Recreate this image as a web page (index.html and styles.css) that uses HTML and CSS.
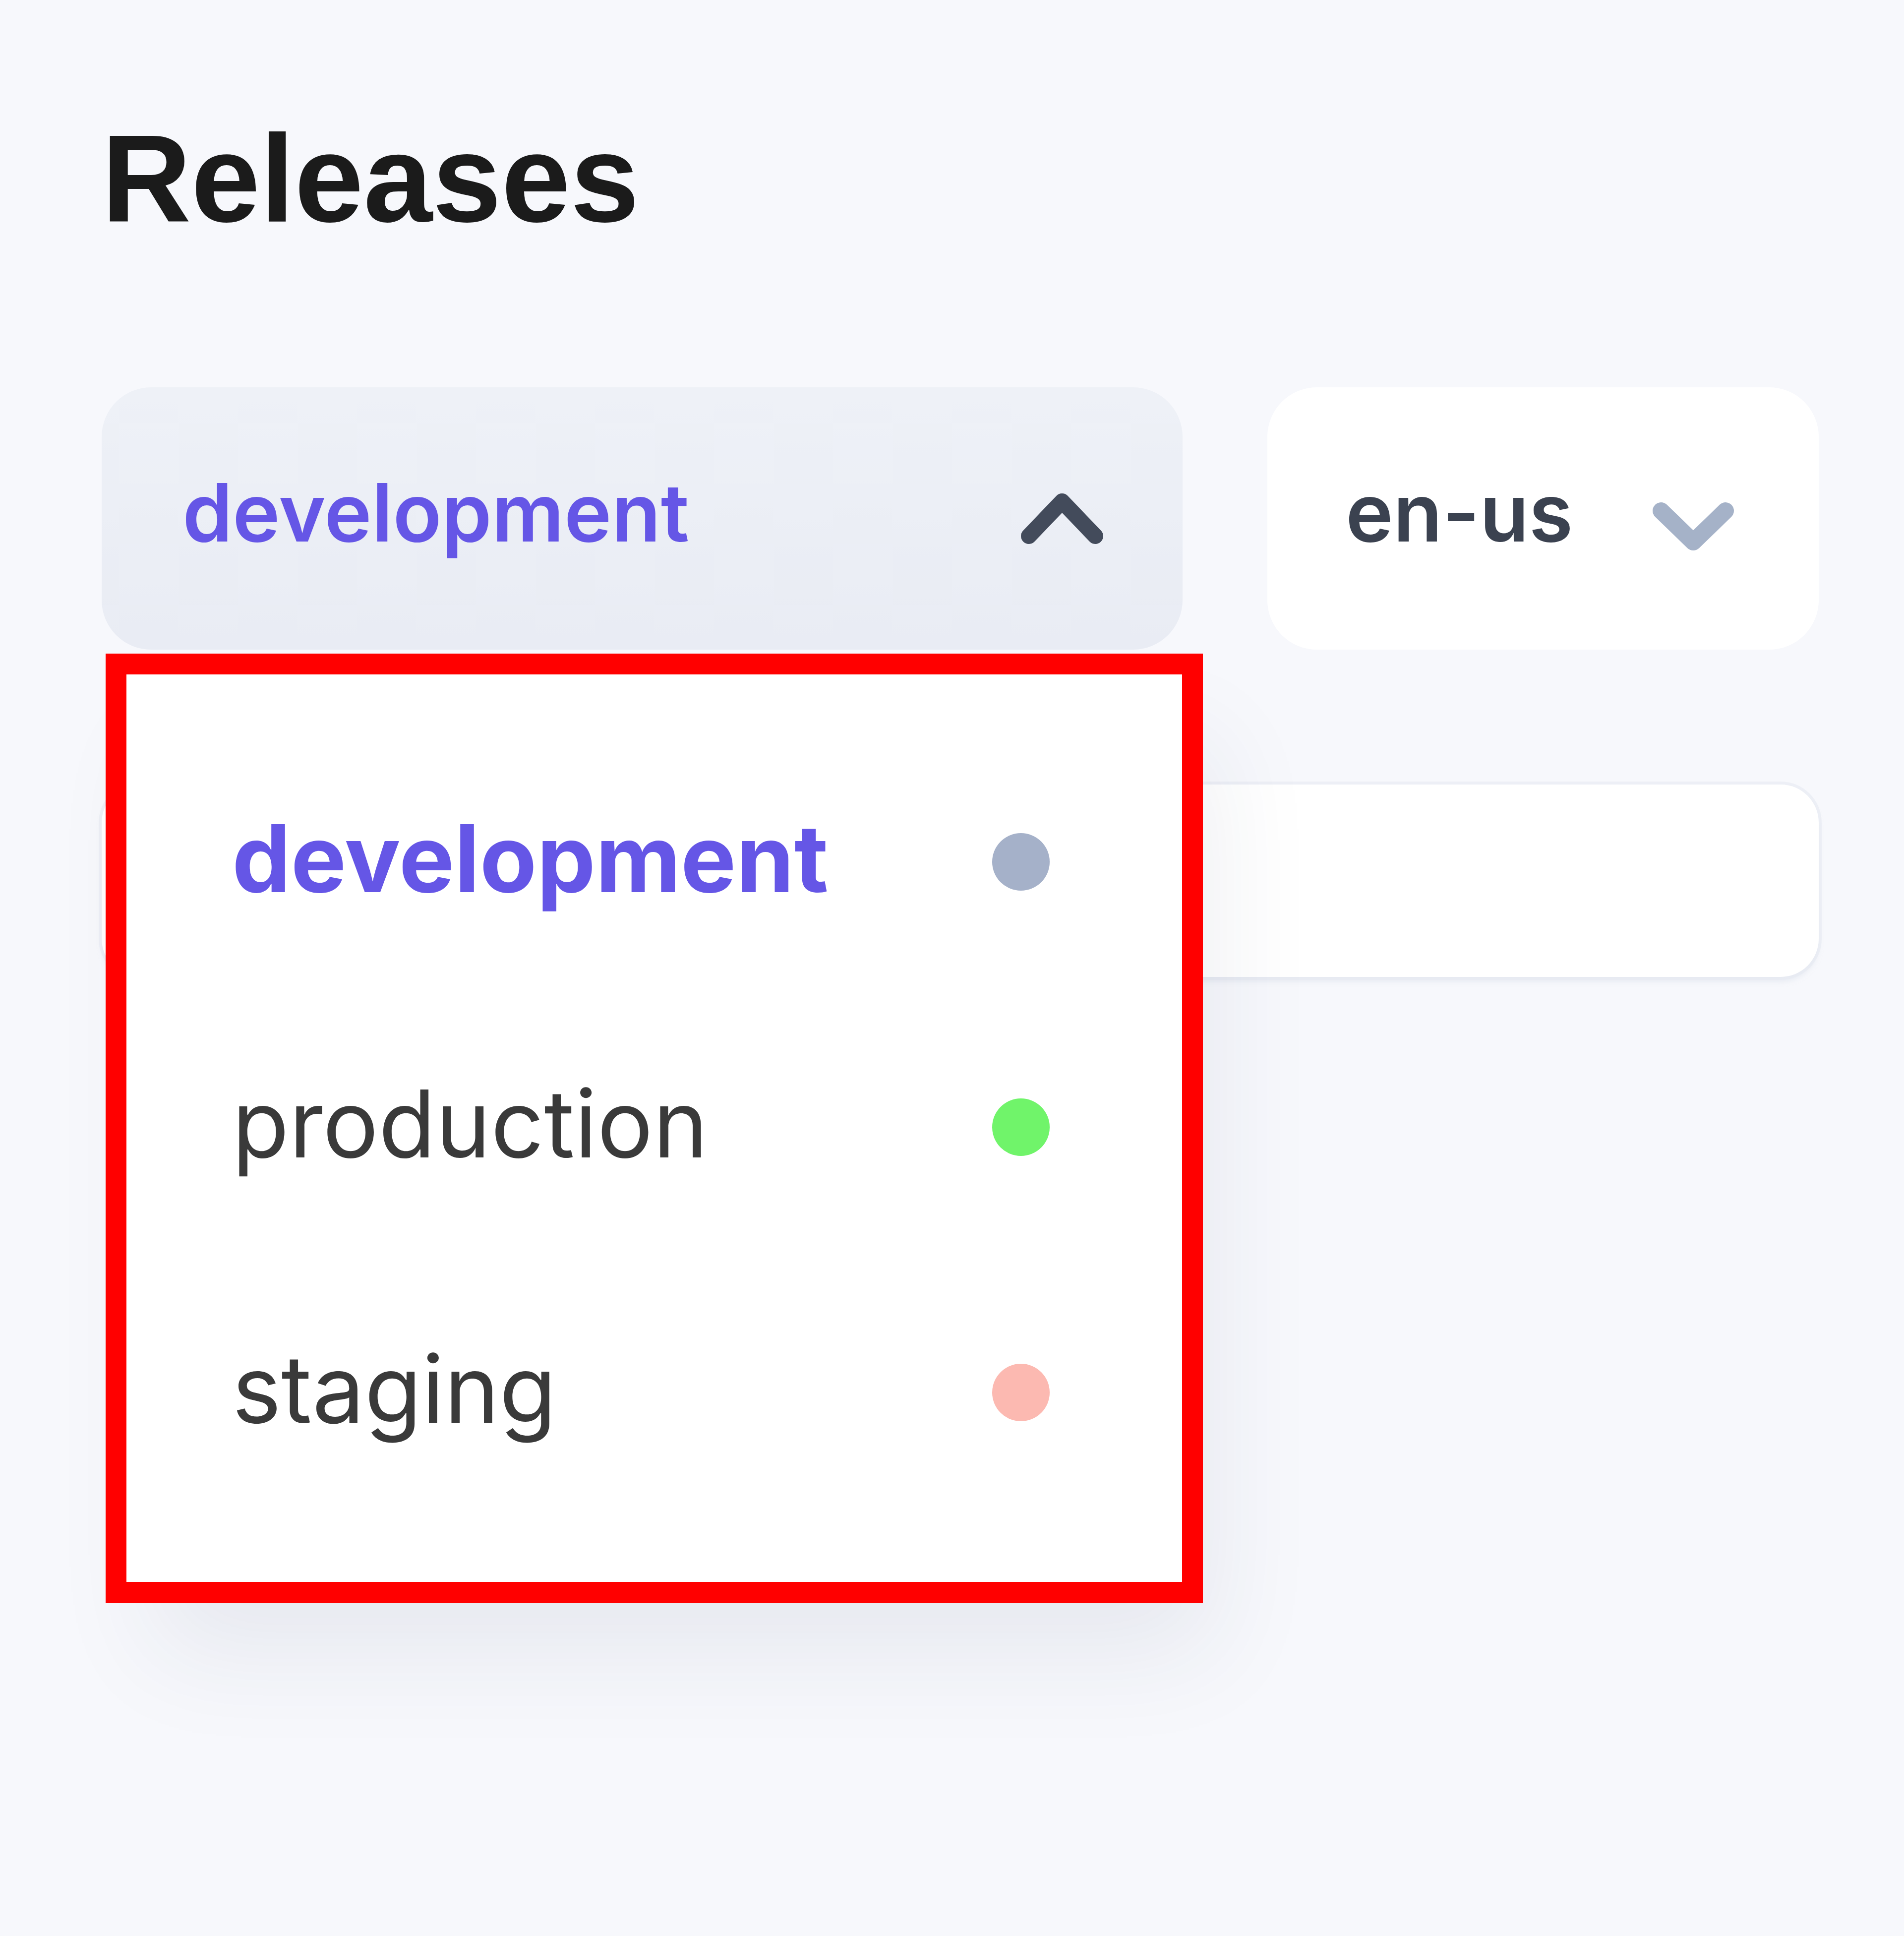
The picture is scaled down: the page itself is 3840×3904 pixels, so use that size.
FILE: index.html
```html
<!DOCTYPE html>
<html lang="en">
<head>
    <meta charset="UTF-8">
    <meta name="viewport" content="width=device-width, initial-scale=1.0">
    <title>Releases</title>
    <link rel="stylesheet" href="styles.css">
</head>
<body>
    <div class="page">
        <h1 class="title">Releases</h1>

        <div class="controls">
            <!-- environment picker, menu open -->
            <div class="env-picker">
                <button class="select select-open">
                    <span class="select-value env-value">development</span>
                    <svg class="chevron chevron-up" width="170" height="110" viewBox="0 0 170 110">
                        <path d="M18 90 L85 20 L152 90" />
                    </svg>
                </button>
                <ul class="env-menu">
                    <li class="env-item active">
                        <span class="env-name">development</span>
                        <span class="dot dot-dev"></span>
                    </li>
                    <li class="env-item">
                        <span class="env-name">production</span>
                        <span class="dot dot-prod"></span>
                    </li>
                    <li class="env-item">
                        <span class="env-name">staging</span>
                        <span class="dot dot-stage"></span>
                    </li>
                </ul>
            </div>

            <button class="select locale">
                <span class="select-value locale-value">en-us</span>
                <svg class="chevron chevron-down" width="166" height="100" viewBox="0 0 166 100">
                    <path d="M18 18 L83 81 L148 18" />
                </svg>
            </button>
        </div>

        <div class="search-bar"></div>
    </div>
</body>
</html>
```

FILE: styles.css
```css
body {
    margin: 0;
    font-family: Inter, "Noto Sans", sans-serif;
    background-color: #f7f8fc;
}
.page {
    box-sizing: border-box;
    min-height: 100vh;
    padding: 236px 172px 0 205px;
}
.title {
    margin: 0;
    font-family: "Liberation Sans", Arial, sans-serif;
    font-size: 250px;
    line-height: 250px;
    font-weight: 700;
    color: #1b1b1b;
}

.controls {
    display: flex;
    gap: 171px;
    margin-top: 295px;
}
.env-picker {
    position: relative;
    width: 2180px;
}
.select {
    display: flex;
    align-items: center;
    justify-content: space-between;
    box-sizing: border-box;
    width: 100%;
    height: 529px;
    padding: 0 158px 0 163px;
    border: none;
    border-radius: 100px;
    background-color: #fff;
    font-family: inherit;
    cursor: pointer;
}
.select-open {
    background: linear-gradient(#eef1f7, #e9ecf4);
}
.select-value {
    font-size: 162px;
    font-weight: 600;
    padding-bottom: 26px;
}
.env-value {
    color: #6556e6;
}
.locale {
    width: 1112px;
    padding: 0 170px 0 158px;
}
.locale-value {
    color: #3b4250;
}

.chevron path {
    fill: none;
    stroke-linecap: round;
    stroke-linejoin: round;
}
.chevron-up path {
    stroke: #434b5b;
    stroke-width: 32;
}
.chevron-down {
    margin-top: 32px;
}
.chevron-down path {
    stroke: #a5b2c8;
    stroke-width: 34;
}

/* open dropdown */
.env-menu {
    position: absolute;
    top: 537px;
    left: 8px;
    z-index: 2;
    box-sizing: border-box;
    width: 2213px;
    margin: 0;
    padding: 110px 0 115px;
    list-style: none;
    background-color: #fff;
    border: 42px solid #ff0000;
    box-shadow: 60px 140px 200px -40px rgba(40, 50, 90, 0.08);
}
.env-item {
    display: flex;
    align-items: center;
    justify-content: space-between;
    height: 535px;
    padding: 0 267px 0 213px;
}
.env-name {
    font-size: 188px;
    color: #3a3a3a;
    padding-bottom: 14px;
}
.env-item.active .env-name {
    color: #6556e6;
    font-weight: 700;
}
.dot {
    width: 116px;
    height: 116px;
    border-radius: 50%;
}
.dot-dev {
    background-color: #a5b1c9;
}
.dot-prod {
    background-color: #70f46a;
}
.dot-stage {
    background-color: #fcb9b1;
}

.search-bar {
    height: 388px;
    margin-top: 272px;
    background-color: #fff;
    border-radius: 77px;
    box-shadow: 0 0 0 6px rgba(230, 234, 242, 0.6), 0 10px 10px rgba(220, 226, 236, 0.5);
}
```
